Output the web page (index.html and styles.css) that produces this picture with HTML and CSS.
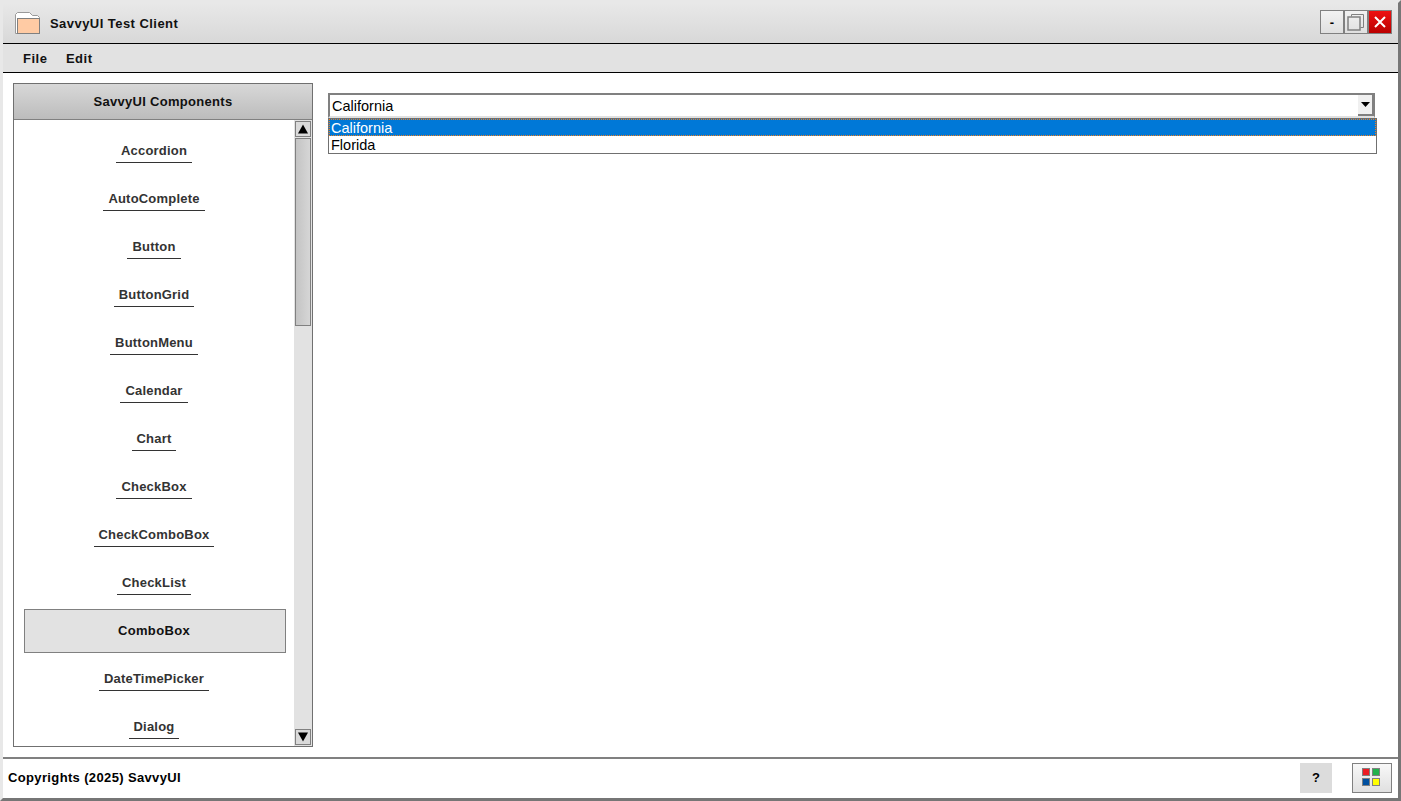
FILE: index.html
```html
<!DOCTYPE html>
<html lang="en">
<head>
<meta charset="utf-8">
<title>SavvyUI Test Client</title>
<link rel="stylesheet" href="styles.css">
</head>
<body>
<div class="window">
  <header class="titlebar">
    <svg class="app-icon" width="26" height="22" viewBox="0 0 26 22">
      <path d="M0.5 21.500V2.500L2.500 0.500H14.500L17.500 3.500H22.500L24.500 5.500V21.500Z" fill="#fff" stroke="#999"/>
      <rect x="2.500" y="6.500" width="22" height="15" fill="#ffcba4" stroke="#808080"/>
    </svg>
    <span class="title">SavvyUI Test Client</span>
    <div class="win-buttons">
      <button class="win-btn">-</button>
      <button class="win-btn">
        <svg width="20" height="20" viewBox="0 0 20 20"><path d="M5.500 4.500V2.500H17.500V15.500H14.500" fill="none" stroke="#808080"/><rect x="2" y="5" width="12" height="13" fill="none" stroke="#808080" stroke-width="1.500"/></svg>
      </button>
      <button class="win-btn close">
        <svg width="12" height="12" viewBox="0 0 12 12"><path d="M1 1L11 11M11 1L1 11" stroke="#fff" stroke-width="2"/></svg>
      </button>
    </div>
  </header>
  <nav class="menubar"><span>File</span><span>Edit</span></nav>
  <main class="content">
    <aside class="panel">
      <div class="panel-head">SavvyUI Components</div>
      <div class="panel-body">
        <ul class="nav-list">
          <li><a>Accordion</a></li>
          <li><a>AutoComplete</a></li>
          <li><a>Button</a></li>
          <li><a>ButtonGrid</a></li>
          <li><a>ButtonMenu</a></li>
          <li><a>Calendar</a></li>
          <li><a>Chart</a></li>
          <li><a>CheckBox</a></li>
          <li><a>CheckComboBox</a></li>
          <li><a>CheckList</a></li>
          <li class="selected"><a>ComboBox</a></li>
          <li><a>DateTimePicker</a></li>
          <li><a>Dialog</a></li>
        </ul>
        <div class="scrollbar">
          <div class="sb-btn"><svg width="10" height="10" viewBox="0 0 10 10"><path d="M5 0.500L10 9.500H0Z" fill="#000"/></svg></div>
          <div class="sb-thumb"></div>
          <div class="sb-track"></div>
          <div class="sb-btn"><svg width="10" height="10" viewBox="0 0 10 10"><path d="M0 0.500H10L5 9.500Z" fill="#000"/></svg></div>
        </div>
      </div>
    </aside>
    <section class="stage">
      <div class="combo">
        <div class="combo-field">
          <span>California</span>
          <div class="combo-arrow"><svg width="9" height="5" viewBox="0 0 9 5"><path d="M0 0H9L4.500 5Z" fill="#000"/></svg></div>
        </div>
        <ul class="combo-list">
          <li class="active">California</li>
          <li>Florida</li>
        </ul>
      </div>
    </section>
  </main>
  <footer class="statusbar">
    <span class="copyright">Copyrights (2025) SavvyUI</span>
    <button class="help">?</button>
    <button class="theme">
      <span class="swatches"><i class="red"></i><i class="green"></i><i class="blue"></i><i class="yellow"></i></span>
    </button>
  </footer>
</div>
</body>
</html>
```
FILE: styles.css
```css
* { box-sizing: border-box; }
html, body { margin: 0; height: 100%; overflow: hidden; background: #fff; }
body { font-family: "Liberation Sans", Arial, sans-serif; }
.window {
  width: 1401px; height: 801px;
  display: flex; flex-direction: column;
  border-style: solid;
  border-width: 3px;
  border-color: #e8e8e8 #767676 #767676 #e8e8e8;
}
.titlebar {
  height: 41px; flex: none;
  display: flex; align-items: center;
  padding-left: 12px; padding-right: 6px;
  background: linear-gradient(#e8e8e8, #d8d8d8);
  border-bottom: 1px solid #000;
}
.app-icon { flex: none; }
.title { margin-left: 9px; font-weight: 700; font-size: 13px; letter-spacing: 0.45px; color: #111; }
.win-buttons { margin-left: auto; display: flex; margin-top: -2px; }
.win-btn {
  width: 24px; height: 24px; padding: 0;
  display: flex; align-items: center; justify-content: center;
  border: 1px solid #808080;
  background: linear-gradient(#f2f2f2, #e0e0e0);
  font: 700 13px "Liberation Sans", sans-serif; color: #000;
}
.win-btn.close { background: linear-gradient(#ee1111, #bb0000); }
.menubar {
  height: 29px; flex: none;
  display: flex; align-items: center; gap: 18.500px;
  padding-left: 20px;
  background: #e2e2e2;
  border-bottom: 1px solid #000;
  font-weight: 700; font-size: 13px; letter-spacing: 0.5px; color: #111;
}
.content { flex: 1; min-height: 0; display: flex; padding: 10px; background: #fff; }
.panel { width: 300px; flex: none; display: flex; flex-direction: column; border: 1px solid #707070; }
.panel-head {
  height: 36px; flex: none;
  display: flex; align-items: center; justify-content: center;
  background: linear-gradient(#d8d8d8, #bcbcbc);
  border-bottom: 1px solid #808080;
  font-weight: 700; font-size: 13px; letter-spacing: 0.3px; color: #111;
}
.panel-body { flex: 1; min-height: 0; display: flex; overflow: hidden; }
.nav-list { flex: 1; list-style: none; margin: 0; padding: 0 8px 0 10px; overflow: hidden; }
.nav-list li { height: 44px; margin-top: 4px; display: flex; align-items: center; justify-content: center; }
.nav-list li:first-child { margin-top: 9px; }
.nav-list a {
  display: block; padding: 0 5px 3px; margin: 3px 2px 0 0;
  border-bottom: 1px solid #333;
  font-weight: 700; font-size: 13px; letter-spacing: 0.2px; line-height: 17px; color: #333;
}
.nav-list li.selected { background: #e2e2e2; border: 1px solid #808080; }
.nav-list li.selected a { border: 0; margin: 0 2px 2px 0; padding: 0; letter-spacing: 0.35px; color: #111; }
.scrollbar { width: 18px; flex: none; background: #e2e2e2; display: flex; flex-direction: column; padding: 1px; }
.sb-btn { height: 16px; flex: none; display: flex; align-items: center; justify-content: center; border: 1px solid #808080; background: #dadada; }
.sb-thumb { height: 188px; flex: none; background: linear-gradient(90deg, #c4c4c4, #d6d6d6); border: 1px solid #808080; margin-top: 1px; }
.sb-track { flex: 1; }
.stage { flex: 1; padding: 10px 11px 0 15px; }
.combo-field {
  height: 25px; width: 1047px;
  display: flex; align-items: center; justify-content: space-between;
  padding: 0 0 0 2px;
  border: 2px solid #808080; border-right-width: 1px; border-bottom-color: #e0e0e0;
  font-size: 14.500px; color: #000;
}
.combo-arrow { width: 16px; height: 21px; display: flex; align-items: center; justify-content: center; background: #f0f0f0; border-right: 2px solid #808080; border-bottom: 2px solid #808080; }
.combo-list { list-style: none; margin: 0; padding: 0; width: 1049px; border: 1px solid #707070; font-size: 14.500px; color: #000; }
.combo-list li { height: 17px; line-height: 18px; padding-left: 2px; }
.combo-list li.active { background: #0078d7; color: #fff; outline: 1px dotted #f08020; outline-offset: -1px; }
.statusbar {
  height: 41px; flex: none;
  display: flex; align-items: center;
  padding: 0 6px 2px 5px;
  border-top: 2px solid #808080;
  background: #fff;
}
.copyright { font-weight: 700; font-size: 13px; letter-spacing: 0.36px; color: #000; margin-right: auto; }
.help { width: 32px; height: 30px; padding: 0; border: 0; background: #dcdcdc; font: 700 13px "Liberation Sans", sans-serif; margin-right: 20px; }
.theme { width: 40px; height: 30px; padding: 0 2px 2px 0; border: 1px solid #808080; background: linear-gradient(#f8f8f8, #e0e0e0); display: flex; align-items: center; justify-content: center; }
.swatches { display: grid; grid-template-columns: 8px 8px; gap: 2px; }
.swatches i { display: block; width: 8px; height: 8px; border: 1px solid #808080; }
.red { background: #ed1c24; }
.green { background: #22b14c; }
.blue { background: #0050a0; }
.yellow { background: #ffff00; }
```
